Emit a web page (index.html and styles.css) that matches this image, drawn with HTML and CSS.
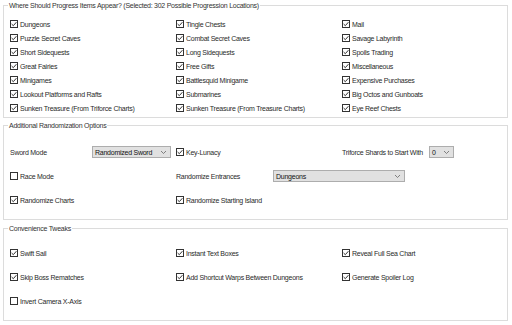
FILE: index.html
```html
<!DOCTYPE html>
<html lang="en">
<head>
    <meta charset="UTF-8">
    <title>Randomizer Options</title>
    <link rel="stylesheet" href="styles.css">
</head>
<body>
    <div class="group group-progress">
        <span class="group-title">Where Should Progress Items Appear? (Selected: 302 Possible Progression Locations)</span>
        <div class="options options-tight">
            <label class="check"><span class="box on"></span>Dungeons</label>
            <label class="check"><span class="box on"></span>Tingle Chests</label>
            <label class="check"><span class="box on"></span>Mail</label>
            <label class="check"><span class="box on"></span>Puzzle Secret Caves</label>
            <label class="check"><span class="box on"></span>Combat Secret Caves</label>
            <label class="check"><span class="box on"></span>Savage Labyrinth</label>
            <label class="check"><span class="box on"></span>Short Sidequests</label>
            <label class="check"><span class="box on"></span>Long Sidequests</label>
            <label class="check"><span class="box on"></span>Spoils Trading</label>
            <label class="check"><span class="box on"></span>Great Fairies</label>
            <label class="check"><span class="box on"></span>Free Gifts</label>
            <label class="check"><span class="box on"></span>Miscellaneous</label>
            <label class="check"><span class="box on"></span>Minigames</label>
            <label class="check"><span class="box on"></span>Battlesquid Minigame</label>
            <label class="check"><span class="box on"></span>Expensive Purchases</label>
            <label class="check"><span class="box on"></span>Lookout Platforms and Rafts</label>
            <label class="check"><span class="box on"></span>Submarines</label>
            <label class="check"><span class="box on"></span>Big Octos and Gunboats</label>
            <label class="check"><span class="box on"></span>Sunken Treasure (From Triforce Charts)</label>
            <label class="check"><span class="box on"></span>Sunken Treasure (From Treasure Charts)</label>
            <label class="check"><span class="box on"></span>Eye Reef Chests</label>
        </div>
    </div>

    <div class="group group-extra">
        <span class="group-title">Additional Randomization Options</span>
        <div class="options options-wide">
            <div class="field">
                <span class="field-label sword-label">Sword Mode</span>
                <div class="dropdown sword-select">Randomized Sword<span class="arrow"></span></div>
            </div>
            <label class="check"><span class="box on"></span>Key-Lunacy</label>
            <div class="field">
                <span class="field-label shards-label">Triforce Shards to Start With</span>
                <div class="dropdown shards-select">0<span class="arrow"></span></div>
            </div>

            <label class="check"><span class="box"></span>Race Mode</label>
            <div class="field span-2">
                <span class="field-label entrance-label">Randomize Entrances</span>
                <div class="dropdown entrance-select">Dungeons<span class="arrow"></span></div>
            </div>

            <label class="check"><span class="box on"></span>Randomize Charts</label>
            <label class="check"><span class="box on"></span>Randomize Starting Island</label>
        </div>
    </div>

    <div class="group group-tweaks">
        <span class="group-title">Convenience Tweaks</span>
        <div class="options options-wide">
            <label class="check"><span class="box on"></span>Swift Sail</label>
            <label class="check"><span class="box on"></span>Instant Text Boxes</label>
            <label class="check"><span class="box on"></span>Reveal Full Sea Chart</label>
            <label class="check"><span class="box on"></span>Skip Boss Rematches</label>
            <label class="check"><span class="box on"></span>Add Shortcut Warps Between Dungeons</label>
            <label class="check"><span class="box on"></span>Generate Spoiler Log</label>
            <label class="check"><span class="box"></span>Invert Camera X-Axis</label>
        </div>
    </div>
</body>
</html>
```

FILE: styles.css
```css
body {
    font-family: 'Liberation Sans', Arial, sans-serif;
    font-size: 7px;
    letter-spacing: -0.25px;
    line-height: 1;
    margin: 0;
    padding: 5px 4px 0 3px;
    color: #2a2a2a;
    background-color: #fff;
}

.group {
    position: relative;
    border: 1px solid #dcdcdc;
    padding: 0 6px;
}

.group-title {
    position: absolute;
    top: -4px;
    left: 4px;
    padding: 0 1px;
    background-color: #fff;
    color: #333;
    white-space: nowrap;
}

.group-progress {
    padding-top: 11px;
    padding-bottom: 2px;
}

.group-extra {
    margin-top: 7px;
    padding-top: 14px;
    padding-bottom: 7px;
}

.group-tweaks {
    margin-top: 8px;
    padding-top: 12px;
    padding-bottom: 7px;
}

.options {
    display: grid;
    grid-template-columns: 166px 166px 1fr;
    align-items: center;
}

.options-tight {
    grid-auto-rows: 14px;
}

.options-wide {
    grid-auto-rows: 24px;
}

.check {
    display: flex;
    align-items: center;
    white-space: nowrap;
}

.box {
    width: 8px;
    height: 8px;
    box-sizing: border-box;
    border: 1px solid #333;
    margin-right: 2px;
    background-color: #fff;
    flex-shrink: 0;
}

.box.on {
    background: #fff url("data:image/svg+xml,%3Csvg xmlns='http://www.w3.org/2000/svg' width='6' height='6' viewBox='0 0 6 6'%3E%3Cpolyline points='0.6,3 2.3,4.7 5.4,1.2' fill='none' stroke='%23333' stroke-width='1'/%3E%3C/svg%3E") center / 6px 6px no-repeat;
}

.field {
    display: flex;
    align-items: center;
    white-space: nowrap;
}

.span-2 {
    grid-column: 2 / 4;
}

.sword-label {
    width: 82px;
}

.shards-label {
    width: 87px;
}

.entrance-label {
    width: 97px;
}

.dropdown {
    position: relative;
    height: 12px;
    box-sizing: border-box;
    border: 1px solid #adadad;
    background-color: #e1e1e1;
    padding: 0 2px;
    display: flex;
    align-items: center;
    color: #111;
}

.sword-select {
    width: 79px;
}

.shards-select {
    width: 25px;
}

.entrance-select {
    width: 132px;
}

.arrow {
    position: absolute;
    right: 4px;
    top: 4px;
    width: 5px;
    height: 3px;
    background: url("data:image/svg+xml,%3Csvg xmlns='http://www.w3.org/2000/svg' width='5' height='3' viewBox='0 0 5 3'%3E%3Cpolyline points='0,0 2.5,2.5 5,0' fill='none' stroke='%23666' stroke-width='0.8'/%3E%3C/svg%3E") no-repeat;
}
```
